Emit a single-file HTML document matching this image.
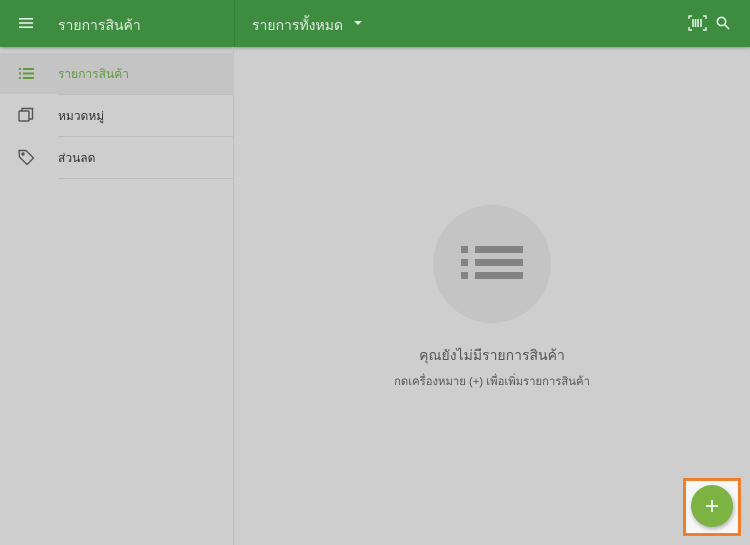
<!DOCTYPE html>
<html><head><meta charset="utf-8"><style>
*{margin:0;padding:0;box-sizing:border-box}
body{width:750px;height:545px;background:#cecece;font-family:"Liberation Sans","Noto Sans CJK SC",sans-serif;position:relative;overflow:hidden}
.hdr{position:absolute;left:0;top:0;width:750px;height:47px;background:#3d8c40;box-shadow:0 1px 3px rgba(0,0,0,.3)}
.hdr .div{position:absolute;left:234px;top:0;width:1px;height:47px;background:#378039}
.t{position:absolute;color:#dfeadf;font-size:14px}
.side{position:absolute;left:0;top:47px;width:234px;height:498px;border-right:1px solid #bdbdbd}
.row{position:absolute;left:0;width:234px;height:42px}
.row .lbl{position:absolute;left:58px;top:12px;font-size:12px;color:#333}
.sep{position:absolute;left:58px;width:176px;height:1px;background:#bcbcbc}
</style></head><body>
<div class="hdr">
<div class="div"></div>
<svg style="position:absolute;left:19px;top:17px" width="14" height="12"><rect y="1" width="14" height="1.6" fill="#e4efe4"/><rect y="5.2" width="14" height="1.6" fill="#e4efe4"/><rect y="9.4" width="14" height="1.6" fill="#e4efe4"/></svg>
<div class="t" style="left:58px;top:15px">รายการสินค้า</div>
<div class="t" style="left:252px;top:15px">รายการทั้งหมด</div>
<svg style="position:absolute;left:354px;top:21px" width="8" height="5"><path d="M0 0H8L4 4Z" fill="#e4efe4"/></svg>
<svg style="position:absolute;left:688px;top:15px" width="19" height="16" fill="none" stroke="#e4efe4" stroke-width="1.4"><path d="M1 4V1H4M15 1H18V4M18 12V15H15M4 15H1V12"/><path d="M5 4V12M7.5 4V12M10 4V12M13 4V12" stroke-width="1.6"/></svg>
<svg style="position:absolute;left:716px;top:16px" width="14" height="14" fill="none" stroke="#e4efe4" stroke-width="1.6"><circle cx="5.5" cy="5.5" r="4.2"/><path d="M8.6 8.6L13 13"/></svg>
</div>
<div class="side">
<div class="row" style="top:6px;background:#c4c4c4;height:41px">
<svg style="position:absolute;left:19px;top:15px" width="15" height="11" fill="#5e9b3d"><rect y="0" width="2" height="2"/><rect y="4.5" width="2" height="2"/><rect y="9" width="2" height="2"/><rect x="4" y="0" width="11" height="2"/><rect x="4" y="4.5" width="11" height="2"/><rect x="4" y="9" width="11" height="2"/></svg>
<div class="lbl" style="color:#5e9b3d">รายการสินค้า</div></div>
<div class="sep" style="top:47px"></div>
<div class="row" style="top:48px">
<svg style="position:absolute;left:18px;top:12px" width="16" height="16" fill="none" stroke="#555" stroke-width="1.4"><rect x="1" y="4" width="10" height="10" rx="1"/><path d="M4 4V1.5H14.5V12H11"/></svg>
<div class="lbl">หมวดหมู่</div></div>
<div class="sep" style="top:89px"></div>
<div class="row" style="top:90px">
<svg style="position:absolute;left:18px;top:12px" width="17" height="17" fill="none" stroke="#555" stroke-width="1.4"><path d="M1 1.5H8L15.5 9L9 15.5L1.5 8Z" stroke-linejoin="round"/><circle cx="5" cy="5" r="1"/></svg>
<div class="lbl">ส่วนลด</div></div>
<div class="sep" style="top:131px"></div>
</div>
<div style="position:absolute;left:433px;top:205px;width:118px;height:118px;border-radius:50%;background:#c4c4c4"></div>
<svg style="position:absolute;left:461px;top:246px" width="63" height="35" fill="#838383"><rect x="0" y="0" width="7" height="7"/><rect x="0" y="13" width="7" height="7"/><rect x="0" y="26" width="7" height="7"/><rect x="14" y="0" width="48" height="7"/><rect x="14" y="13" width="48" height="7"/><rect x="14" y="26" width="48" height="7"/></svg>
<div style="position:absolute;left:234px;width:516px;top:345px;text-align:center;font-size:14px;color:#555">คุณยังไม่มีรายการสินค้า</div>
<div style="position:absolute;left:234px;width:516px;top:372px;text-align:center;font-size:11.3px;color:#555">กดเครื่องหมาย (+) เพื่อเพิ่มรายการสินค้า</div>
<div style="position:absolute;left:683px;top:478px;width:58px;height:58px;border:3px solid #f07f2b;background:#f7f7f7"></div>
<div style="position:absolute;left:691px;top:485px;width:42px;height:42px;border-radius:50%;background:#7cb342;box-shadow:1px 2px 4px rgba(0,0,0,.3)"></div>
<svg style="position:absolute;left:706px;top:500px" width="12" height="12" fill="#fff"><rect x="5.2" y="0" width="1.6" height="12"/><rect x="0" y="5.2" width="12" height="1.6"/></svg>
</body></html>
